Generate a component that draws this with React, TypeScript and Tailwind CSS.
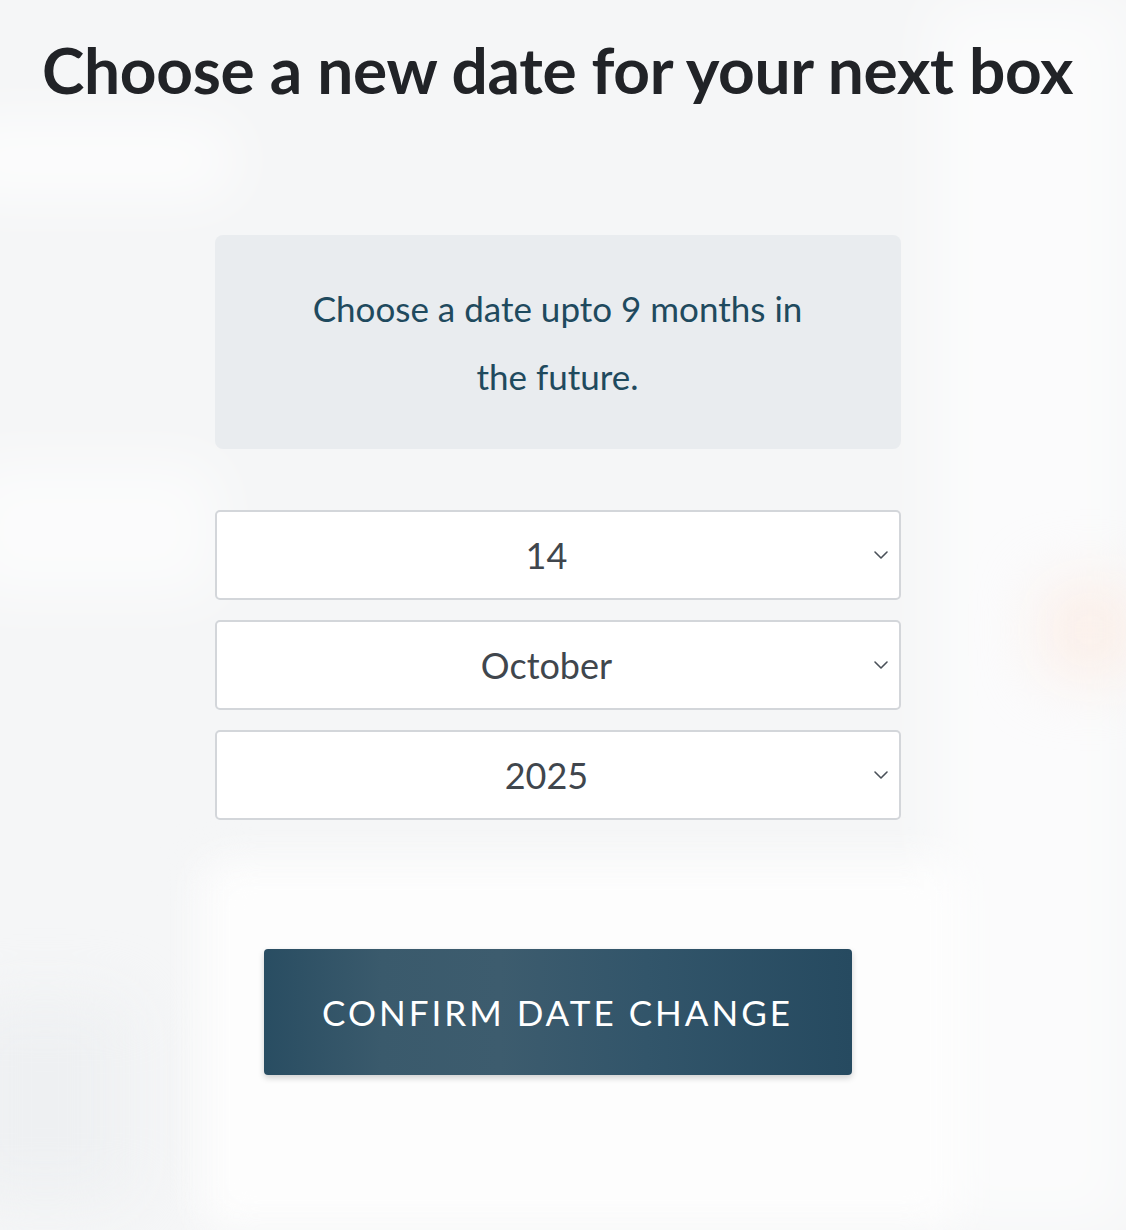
import React from "react";

function Chevron() {
  return (
    <svg width="16" height="10" viewBox="0 0 16 10" fill="none" className="absolute right-[10px] top-1/2 -translate-y-1/2">
      <path d="M2 2 L8 8 L14 2" stroke="#4a5058" strokeWidth="1.6" strokeLinecap="round" strokeLinejoin="round" />
    </svg>
  );
}

function SelectBox({ value }: { value: string }) {
  return (
    <div className="relative h-[90px] w-full rounded-[5px] border-2 border-[#d3d6da] bg-white flex items-center justify-center">
      <span className="text-[36px] text-[#40464d] pr-[22px]">{value}</span>
      <Chevron />
    </div>
  );
}

export default function App() {
  return (
    <div
      className="relative w-[1126px] h-[1230px] overflow-hidden bg-[#f5f6f7]"
      style={{ fontFamily: "Lato, 'Noto Sans', sans-serif" }}
    >
      {/* blurred backdrop shapes */}
      <div className="absolute left-[-60px] top-[120px] w-[300px] h-[80px] rounded-full bg-white/70 blur-[30px]" />
      <div className="absolute left-[-40px] top-[460px] w-[260px] h-[140px] rounded-3xl bg-white/60 blur-[30px]" />
      <div className="absolute left-[200px] top-[860px] w-[760px] h-[370px] rounded-3xl bg-[#fdfdfd] blur-[20px]" />
      <div className="absolute left-[930px] top-[0px] w-[200px] h-[1230px] bg-white/60 blur-[30px]" />
      <div className="absolute left-[-40px] top-[1000px] w-[170px] h-[200px] rounded-3xl bg-[#eef0f2] blur-[30px]" />
      <div className="absolute left-[1040px] top-[580px] w-[100px] h-[100px] rounded-3xl bg-[#fbefe9] blur-[30px]" />

      <div className="relative pl-[42px] w-[1073px] flex flex-col items-center">
        <h1 className="w-full mt-[32px] text-[64px] leading-[76px] font-bold text-[#212327] whitespace-nowrap tracking-[-0.3px]">
          Choose a new date for your next box
        </h1>

        <div className="mt-[127px] w-[686px] h-[214px] rounded-[8px] bg-[#e9ecef] flex items-center justify-center px-[50px]">
          <p className="text-center text-[35px] leading-[68px] text-[#1f4a5e]">
            Choose a date upto 9 months in
            <br />
            the future.
          </p>
        </div>

        <div className="mt-[61px] w-[686px] flex flex-col gap-[20px]">
          <SelectBox value="14" />
          <SelectBox value="October" />
          <SelectBox value="2025" />
        </div>

        <button
          className="mt-[129px] w-[588px] h-[126px] rounded-[4px] text-white text-[35px] tracking-[3px] shadow-[0_3px_6px_rgba(0,0,0,0.18)]"
          style={{
            background:
              "linear-gradient(90deg, #294d62 0%, #3a5a6c 20%, #3d5c6e 40%, #32556a 65%, #264a60 100%)",
          }}
        >
          CONFIRM DATE CHANGE
        </button>
      </div>
    </div>
  );
}
